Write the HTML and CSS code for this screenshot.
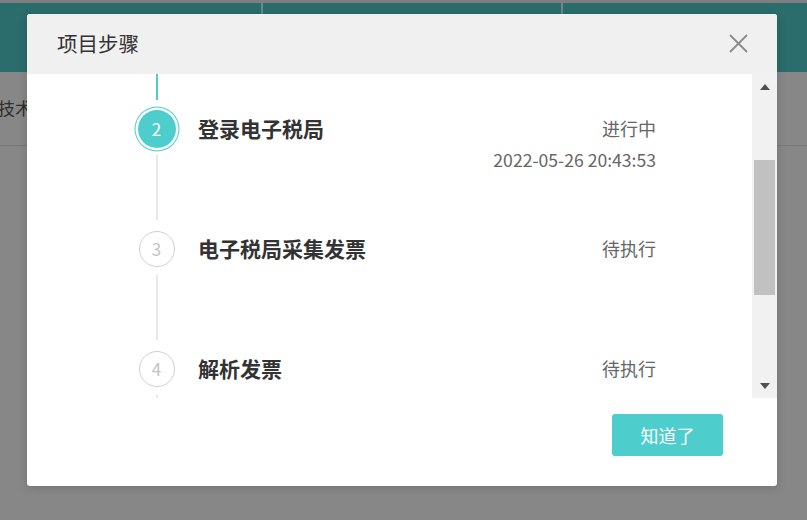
FILE: index.html
```html
<!DOCTYPE html>
<html lang="zh-CN">

<head>
  <meta charset="UTF-8">
  <meta name="viewport" content="width=device-width, initial-scale=1.0" />
  <title>项目步骤</title>
  <link rel="stylesheet" href="styles.css">
</head>

<body>
  <div class="page">
    <div class="top-strip"></div>
    <div class="nav">
      <div class="nav-cell"></div>
      <div class="nav-cell"></div>
      <div class="nav-cell"></div>
    </div>
    <div class="sub-row">
      <span class="sub-text">技术</span>
    </div>
  </div>

  <div class="modal">
    <div class="modal-header">
      <div class="modal-title">项目步骤</div>
      <span class="modal-close">
        <svg width="19" height="19" viewBox="0 0 19 19">
          <path d="M1 1 L18 18 M18 1 L1 18" stroke="#8a8a8a" stroke-width="1.8" fill="none" />
        </svg>
      </span>
    </div>

    <div class="modal-body">
      <div class="steps">
        <div class="lead-line"></div>

        <div class="step">
          <div class="marker">
            <div class="dot-wrap"><span class="dot active">2</span></div>
            <div class="line"></div>
          </div>
          <div class="step-info">
            <div class="step-title">登录电子税局</div>
            <div class="step-meta">
              <div class="step-status">进行中</div>
              <div class="step-date">2022-05-26 20:43:53</div>
            </div>
          </div>
        </div>

        <div class="step">
          <div class="marker">
            <div class="dot-wrap"><span class="dot">3</span></div>
            <div class="line"></div>
          </div>
          <div class="step-info">
            <div class="step-title">电子税局采集发票</div>
            <div class="step-meta">
              <div class="step-status">待执行</div>
            </div>
          </div>
        </div>

        <div class="step">
          <div class="marker">
            <div class="dot-wrap"><span class="dot">4</span></div>
            <div class="line"></div>
          </div>
          <div class="step-info">
            <div class="step-title">解析发票</div>
            <div class="step-meta">
              <div class="step-status">待执行</div>
            </div>
          </div>
        </div>
      </div>

      <div class="scrollbar">
        <span class="arrow-up"></span>
        <span class="thumb"></span>
        <span class="arrow-down"></span>
      </div>
    </div>

    <div class="modal-footer">
      <button class="btn-ok">知道了</button>
    </div>
  </div>
</body>

</html>
```

FILE: styles.css
```css
* {
  box-sizing: border-box;
  margin: 0;
  padding: 0;
}

body {
  font-family: "Noto Sans CJK SC", "Noto Sans", sans-serif;
  width: 807px;
  height: 520px;
  overflow: hidden;
  background: #878787;
  color: #333;
}

/* page under the overlay */
.top-strip {
  height: 3px;
  background: #7e7e7e;
}

.nav {
  height: 69px;
  display: flex;
  background: #2b6c6c;
}

.nav-cell {
  flex: 0 0 261px;
}

.nav-cell:nth-child(2) {
  flex: 0 0 300px;
  border-left: 2px solid #6a8888;
}

.nav-cell:nth-child(3) {
  flex: 1;
  border-left: 2px solid #6a8888;
}

.sub-row {
  height: 74px;
  border-bottom: 1px solid #777;
  display: flex;
  align-items: center;
}

.sub-text {
  font-size: 17px;
  color: #2e2e2e;
  margin-left: -2px;
  margin-top: -2px;
}

/* modal */
.modal {
  position: absolute;
  left: 27px;
  top: 14px;
  width: 750px;
  height: 472px;
  background: #fff;
  border-radius: 3px;
  overflow: hidden;
  display: flex;
  flex-direction: column;
  box-shadow: 0 2px 10px rgba(0, 0, 0, 0.15);
}

.modal-header {
  height: 60px;
  background: #f0f0f0;
  display: flex;
  align-items: center;
  justify-content: space-between;
  padding: 0 29px 0 30px;
}

.modal-title {
  font-size: 20.5px;
  color: #333;
  margin-top: -2px;
}

.modal-close {
  display: flex;
  margin-top: -2px;
}

.modal-body {
  height: 324px;
  display: flex;
}

.steps {
  flex: 1;
  overflow: hidden;
  padding: 0 96px 0 107px;
}

.lead-line {
  width: 2px;
  height: 26px;
  margin: 0 0 6px 21.5px;
  background: #4ecbcb;
}

.step {
  height: 120px;
  display: flex;
}

.marker {
  width: 45px;
  display: flex;
  flex-direction: column;
  align-items: center;
}

.dot-wrap {
  width: 45px;
  height: 45px;
  display: flex;
  align-items: center;
  justify-content: center;
}

.dot {
  width: 36px;
  height: 36px;
  border-radius: 50%;
  border: 1px solid #cfcfcf;
  display: flex;
  align-items: center;
  justify-content: center;
  font-size: 17px;
  color: #c4c4c4;
}

.dot.active {
  width: 38px;
  height: 38px;
  border: none;
  background: #4ecdcd;
  color: #fff;
  box-shadow: 0 0 0 2.5px #fff, 0 0 0 3.5px #4ecbcb;
}

.line {
  flex: 1;
  width: 2px;
  margin: 4px 0 6px;
  background: #e8e8e8;
}

.step-info {
  flex: 1;
  display: flex;
  justify-content: space-between;
  align-items: flex-start;
  padding-left: 19px;
}

.step-title {
  font-size: 21px;
  font-weight: bold;
  line-height: 45px;
  color: #333;
}

.step-meta {
  text-align: right;
  color: #666;
}

.step-status {
  font-size: 18px;
  line-height: 45px;
}

.step-date {
  font-size: 17.6px;
  line-height: 20px;
  margin-top: -1px;
}

/* drawn scrollbar */
.scrollbar {
  width: 25px;
  background: #f1f1f1;
  display: flex;
  flex-direction: column;
  align-items: center;
  padding: 10px 0 9px;
}

.arrow-up {
  width: 0;
  height: 0;
  border-left: 5.5px solid transparent;
  border-right: 5.5px solid transparent;
  border-bottom: 6px solid #505050;
}

.thumb {
  width: 21px;
  height: 135px;
  margin-top: 70px;
  background: #c1c1c1;
}

.arrow-down {
  width: 0;
  height: 0;
  margin-top: auto;
  border-left: 5.5px solid transparent;
  border-right: 5.5px solid transparent;
  border-top: 6px solid #505050;
}

.modal-footer {
  flex: 1;
  display: flex;
  justify-content: flex-end;
  align-items: flex-start;
  padding: 16px 54px 0 0;
}

.btn-ok {
  width: 111px;
  height: 42px;
  border: none;
  border-radius: 3px;
  background: #4ecdcd;
  color: #fff;
  font-family: inherit;
  font-size: 18px;
}
```
